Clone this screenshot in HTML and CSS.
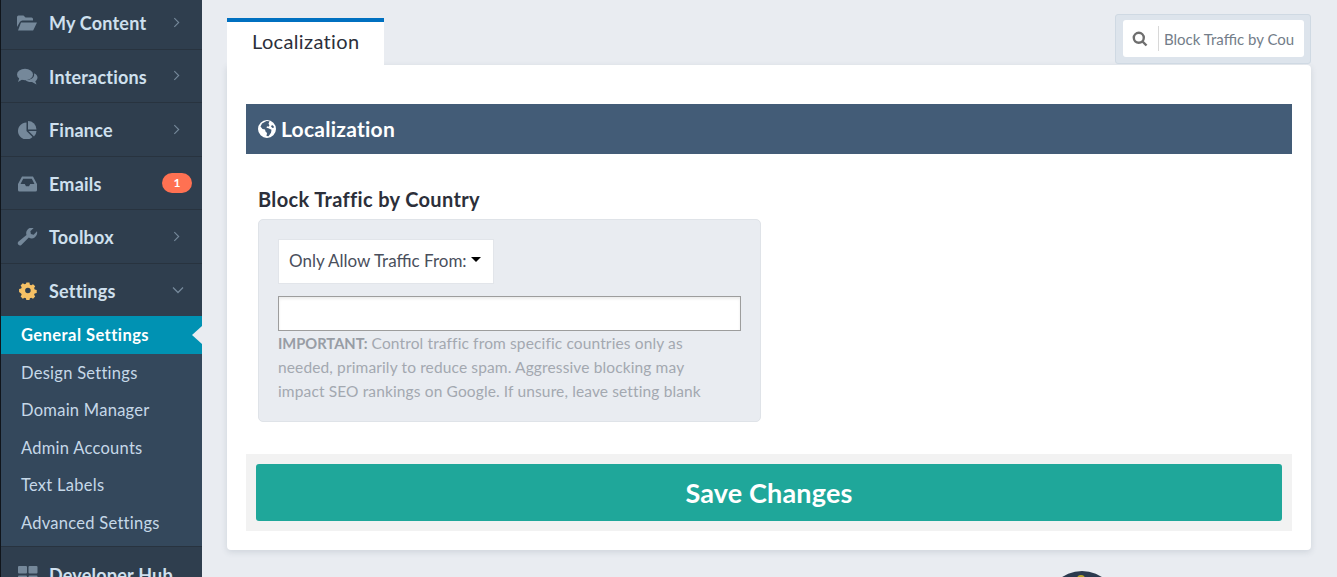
FILE: index.html
```
<!DOCTYPE html>
<html lang="en">
<head>
<meta charset="utf-8">
<title>Localization</title>
<link rel="stylesheet" href="styles.css">
</head>
<body>
<aside class="sidebar">
  <nav class="nav">
    <a class="nav-item"><svg class="nav-icon" viewBox="0 0 22 18"><path d="M1 15V3a1.500 1.500 0 0 1 1.500-1.500h5l2 2h6A1.500 1.500 0 0 1 17 5v1.500H6.500a3 3 0 0 0-2.600 1.500L1 13z"/><path d="M5 8.500h16l-3.600 7.500a1 1 0 0 1-.9.5H2z"/></svg><span class="nav-label">My Content</span><svg class="chev" viewBox="0 0 8 12"><path d="M1.500 1l5 5-5 5"/></svg></a>
    <a class="nav-item"><svg class="nav-icon" viewBox="0 0 22 18"><ellipse cx="9" cy="6.500" rx="8" ry="5.800"/><path d="M3.500 9.500L2 14l5-3z"/><path d="M18.500 5.500c2 1 3 2.500 3 4 0 1.500-.8 2.800-2.200 3.700l1.200 3.300-4.500-2.500c-2.500.3-5-.3-6.500-2 5.500.2 9.500-2.500 8.500-6.500z"/></svg><span class="nav-label">Interactions</span><svg class="chev" viewBox="0 0 8 12"><path d="M1.500 1l5 5-5 5"/></svg></a>
    <a class="nav-item"><svg class="nav-icon" viewBox="0 0 22 18"><path d="M10.500 1.500a8.500 8.500 0 1 0 6 14.500L10.500 10z"/><path d="M12 0v8.500h8.500A8.500 8.500 0 0 0 12 0z"/><path d="M12.500 10h8a8.500 8.500 0 0 1-2.500 5.500z"/></svg><span class="nav-label">Finance</span><svg class="chev" viewBox="0 0 8 12"><path d="M1.500 1l5 5-5 5"/></svg></a>
    <a class="nav-item"><svg class="nav-icon" viewBox="0 0 22 18"><path fill-rule="evenodd" d="M6 1.500h11L21 9v6a1.500 1.500 0 0 1-1.500 1.500h-16A1.500 1.500 0 0 1 2 15V9zM7.200 3.700L4.500 9h4.300l1.200 2.200h3L14.200 9h4.300l-2.700-5.300z"/></svg><span class="nav-label">Emails</span><span class="badge">1</span></a>
    <a class="nav-item"><svg class="nav-icon" viewBox="0 0 22 18"><g transform="translate(-.5 -.5) scale(1.100)"><path d="M19.500 3.500l-3 3-2.500-.5-.5-2.500 3-3a5 5 0 0 0-6.500 6.300L2.500 13a2 2 0 0 0 2.800 2.800l6.800-6.700a5 5 0 0 0 7.400-5.600z"/></g></svg><span class="nav-label">Toolbox</span><svg class="chev" viewBox="0 0 8 12"><path d="M1.500 1l5 5-5 5"/></svg></a>
    <a class="nav-item nav-open"><svg class="nav-icon nav-icon-gear" viewBox="0 0 22 18"><g transform="translate(2 .6) scale(.9)"><path fill-rule="evenodd" d="M9.300 0h3.400l.5 2.300 1.500.6 2-1.200 2.400 2.400-1.200 2 .6 1.500 2.300.5v3.400l-2.300.5-.6 1.500 1.200 2-2.400 2.400-2-1.200-1.500.6-.5 2.300H9.300l-.5-2.300-1.500-.6-2 1.200-2.400-2.400 1.200-2-.6-1.500L1.200 10.500V7.100l2.300-.5.600-1.500-1.200-2 2.400-2.400 2 1.200 1.500-.6zM11 5.700a3.100 3.100 0 1 0 0 6.200 3.100 3.100 0 0 0 0-6.200z"/></g></svg><span class="nav-label">Settings</span><svg class="chev chev-down" viewBox="0 0 12 8"><path d="M1 1.500l5 5 5-5"/></svg></a>
    <div class="subnav">
      <a class="sub-item sub-active">General Settings</a>
      <a class="sub-item">Design Settings</a>
      <a class="sub-item">Domain Manager</a>
      <a class="sub-item">Admin Accounts</a>
      <a class="sub-item">Text Labels</a>
      <a class="sub-item">Advanced Settings</a>
    </div>
    <a class="nav-item nav-last"><svg class="nav-icon" viewBox="0 0 22 18"><rect x="2" y="0" width="9" height="7.500" rx="1"/><rect x="12.500" y="0" width="9" height="7.500" rx="1"/><rect x="2" y="9.500" width="9" height="7.500" rx="1"/><rect x="12.500" y="9.500" width="9" height="7.500" rx="1"/></svg><span class="nav-label">Developer Hub</span></a>
  </nav>
</aside>
<main class="main">
  <div class="top-row">
    <div class="tab">Localization</div>
    <div class="search-wrap">
      <div class="search">
        <svg class="search-icon" viewBox="0 0 16 16"><circle cx="6.800" cy="6.800" r="5"/><path d="M10.500 10.500L14.500 14.500"/></svg>
        <span class="search-text">Block Traffic by Country</span>
      </div>
    </div>
  </div>
  <section class="card">
    <h2 class="section-head"><svg class="globe" viewBox="0 0 18 18"><path fill-rule="evenodd" d="M9 0a9 9 0 1 1 0 18A9 9 0 0 1 9 0zM4 3.500L2.500 6.500l2 2.500 2.500.5.500 2L9 13l-.5 3 2 .2 2.500-3.500.5-3-3-1.500-2-.5.500-1.500 1.500.5 1-1.500-1-1.500 1-2.500-3-.3zM14 5l-1 1.500 1.500 1.500 1.500-.5-.5-1.500z"/></svg><span class="section-label">Localization</span></h2>
    <h3 class="field-title">Block Traffic by Country</h3>
    <div class="field-box">
      <button class="select" type="button">Only Allow Traffic From:<span class="caret"></span></button>
      <div class="text-input"></div>
      <p class="help"><strong>IMPORTANT:</strong> Control traffic from specific countries only as needed, primarily to reduce spam. Aggressive blocking may impact SEO rankings on Google. If unsure, leave setting blank</p>
    </div>
    <div class="save-bar"><button class="save" type="button">Save Changes</button></div>
  </section>
</main>
<div class="bubble"><span class="bubble-dot"></span></div>
</body>
</html>
```
FILE: styles.css
```
* { box-sizing: border-box; }
html, body { margin: 0; height: 100%; overflow: hidden; }
body {
  display: flex;
  background: #e9ecf1;
  font-family: "Lato", "Open Sans", sans-serif;
  color: #2c2f3a;
}
.sidebar {
  width: 202px;
  flex: none;
  height: 577px;
  overflow: hidden;
  background: #2f3e4e;
  border-left: 1px solid #10151b;
}
.nav { margin-top: -4px; }
.nav-item {
  display: flex;
  align-items: center;
  height: 53.500px;
  padding: 2px 10px 0 15px;
  border-bottom: 1px solid #28333f;
  color: #cfe0ee;
  font-size: 18px;
  font-weight: 700;
  letter-spacing: .2px;
}
.nav-icon { width: 22px; height: 18px; fill: #75889a; margin-right: 11px; flex: none; }
.nav-icon-gear { fill: #f6c165; }
.nav-label { flex: 1; }
.chev { width: 7px; height: 11px; fill: none; stroke: #75889a; stroke-width: 1.300; margin-right: 12px; margin-top: -2px; }
.chev-down { width: 12px; height: 8px; margin-right: 8px; }
.badge {
  width: 30px;
  height: 20px;
  margin-top: -2px;
  border-radius: 10px;
  background: #ff7152;
  color: #fff;
  font-size: 12px;
  text-align: center;
  line-height: 20px;
}
.nav-open { border-bottom: 0; height: 52.500px; }
.subnav { background: #34485c; border-bottom: 1px solid #28333f; padding-bottom: 5px; }
.sub-item {
  display: block;
  height: 37.500px;
  padding: 1px 0 0 20px;
  line-height: 36.500px;
  color: #c6d8e8;
  font-size: 16.500px;
  letter-spacing: .27px;
}
.sub-active {
  position: relative;
  background: #0092b3;
  color: #fff;
  font-weight: 700;
  letter-spacing: .45px;
}
.sub-active::after {
  content: "";
  position: absolute;
  right: 0;
  top: 50%;
  margin-top: -9px;
  border: 9px solid transparent;
  border-left-width: 0;
  border-right: 10px solid #e9ecf1;
}
.nav-last { border-bottom: 0; }
.main { width: 1084px; margin-left: 25px; flex: none; }
.top-row { display: flex; justify-content: space-between; height: 65px; padding-top: 14px; }
.tab {
  width: 157px;
  height: 47px;
  margin-top: 4px;
  background: #fff;
  border-top: 4px solid #0070c0;
  padding-left: 25px;
  line-height: 39px;
  font-size: 20px;
  letter-spacing: .35px;
}
.search-wrap {
  width: 196px;
  height: 50px;
  background: #dde4ec;
  border: 1px solid #cfd9e3;
  border-radius: 3px;
  padding: 5px 6px 0 7px;
}
.search {
  display: flex;
  align-items: center;
  height: 37px;
  background: #fff;
  border-radius: 3px;
  padding: 6px 10px 6px 9px;
}
.search-icon { width: 16px; height: 16px; fill: none; stroke: #6e6e6e; stroke-width: 2.400; flex: none; margin-right: 10px; }
.search-text {
  flex: 1;
  border-left: 1px solid #d8d8d8;
  padding-left: 5px;
  height: 25px;
  line-height: 27px;
  font-size: 15px;
  color: #737d89;
  white-space: nowrap;
  overflow: hidden;
}
.card {
  background: #fff;
  height: 485px;
  border-radius: 0 4px 4px 4px;
  box-shadow: 0 2px 6px rgba(70, 85, 105, .16);
  padding: 39px 19px 0;
}
.section-head {
  display: flex;
  align-items: center;
  height: 50px;
  margin: 0;
  padding-left: 12px;
  background: #435c77;
  color: #fff;
  font-size: 21px;
  font-weight: 700;
  letter-spacing: .25px;
}
.section-label { margin-top: -2px; }
.globe { width: 18px; height: 18px; fill: #fff; margin-right: 5px; }
.field-title { margin: 33px 0 8px 12px; font-size: 20px; line-height: 24px; font-weight: 700; letter-spacing: .35px; color: #2c2f3a; }
.field-box {
  width: 503px;
  height: 203px;
  margin-left: 12px;
  background: #e9ecf1;
  border: 1px solid #dfe3e8;
  border-radius: 5px;
  padding: 19px;
}
.select {
  display: flex;
  align-items: center;
  width: 216px;
  height: 45px;
  padding: 0 0 3px 10px;
  background: #fff;
  border: 1px solid #e2e5ea;
  font: 400 17px "Lato", sans-serif;
  color: #4a4f5c;
}
.caret {
  margin-left: 4px;
  margin-top: -2px;
  border-top: 5px solid #000;
  border-left: 5px solid transparent;
  border-right: 5px solid transparent;
}
.text-input {
  width: 463px;
  height: 35px;
  margin-top: 12px;
  background: #fff;
  border: 1px solid #9d9d9d;
  box-shadow: inset 0 2px 3px rgba(0, 0, 0, .08);
}
.help { margin: 0; width: 432px; font-size: 15.500px; line-height: 24px; letter-spacing: .13px; color: #a3a8b0; }
.help strong { font-size: 14.700px; letter-spacing: 0; font-weight: 700; color: #989da5; }
.save-bar { margin-top: 32px; background: #f2f2f2; padding: 10px; }
.save {
  display: block;
  width: 100%;
  height: 57px;
  padding: 0;
  border: 0;
  border-radius: 3px;
  background: #1fa79a;
  color: #fff;
  font: 700 27px "Lato", sans-serif;
  letter-spacing: .15px;
}
.bubble {
  position: absolute;
  left: 1046px;
  top: 571px;
  width: 72px;
  height: 72px;
  border-radius: 50%;
  background: #2b3a4e;
}
.bubble-dot {
  position: absolute;
  left: 31px;
  top: 4px;
  width: 8px;
  height: 8px;
  border-radius: 50%;
  background: #b8a52a;
}
```
